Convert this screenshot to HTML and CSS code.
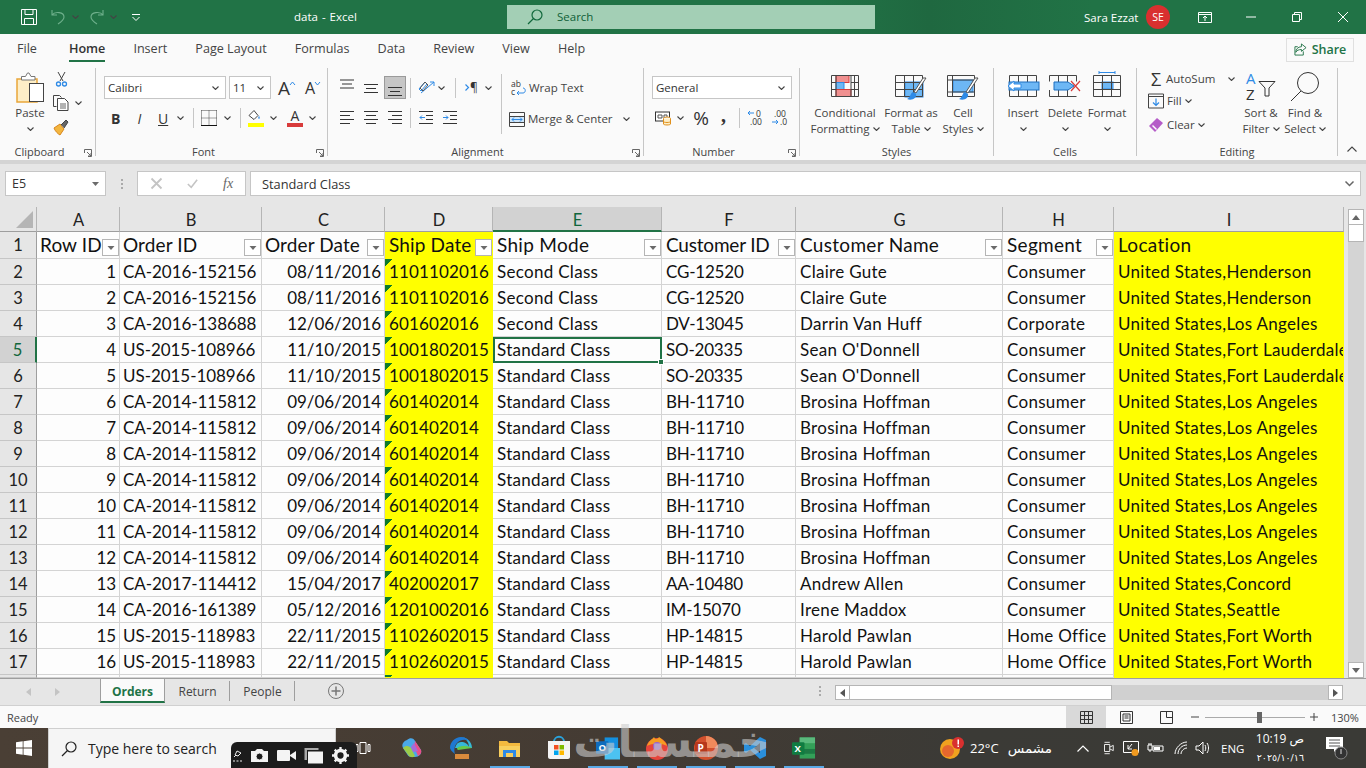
FILE: index.html
```html
<!DOCTYPE html>
<html lang="en">
<head>
<meta charset="utf-8">
<title>data - Excel</title>
<link rel="stylesheet" href="styles.css">
</head>
<body>
<svg class="sprite" width="0" height="0">
  <symbol id="chev" viewBox="0 0 7 4"><path d="M.5.5l3 3 3-3" fill="none" stroke="#444" stroke-width="1.1"/></symbol>
  <symbol id="launch" viewBox="0 0 8 8"><path d="M.5 4V.5h7v7H4M3 3l4 4M7 4v3H4" fill="none" stroke="#666"/></symbol>
  <symbol id="farrow" viewBox="0 0 7 4"><path d="M0 0h7L3.500 4z" fill="#6b6b6b"/></symbol>
</svg>

<header class="titlebar">
  <div class="qat">
    <svg class="i16 ml-21" viewBox="0 0 16 16"><path d="M.5.5h15v15H.5zM4 .5v5h8v-5M3.500 15.500V9.500h9v6" fill="none" stroke="#fff"/></svg>
    <svg class="i14 ml-14" viewBox="0 0 14 16"><path d="M1 1v5h5M1 6c3-4 12-3 12 2 0 3-3 5-6 7" fill="none" stroke="#6fb08c" stroke-width="1.100"/></svg>
    <svg class="chev ml-7"><use href="#chev"/></svg>
    <svg class="i14 ml-11" viewBox="0 0 14 16"><path d="M13 1v5H8M13 6C10 2 1 3 1 8c0 3 3 5 6 7" fill="none" stroke="#6fb08c" stroke-width="1.100"/></svg>
    <svg class="chev ml-6"><use href="#chev"/></svg>
    <svg class="custom ml-15" viewBox="0 0 8 7"><path d="M0 .5h8M.5 3l3.500 3.500 3.500-3.500" fill="none" stroke="#fff"/></svg>
  </div>
  <div class="doc-title">data - Excel</div>
  <div class="search">
    <svg class="i16" viewBox="0 0 16 16"><circle cx="10" cy="6" r="5" fill="none" stroke="#11683c" stroke-width="1.200"/><path d="M6.500 9.500L1 15" stroke="#11683c" stroke-width="1.200"/></svg>
    <span class="search-t">Search</span>
  </div>
  <div class="account">
    <span class="user">Sara Ezzat</span>
    <span class="avatar">SE</span>
    <svg class="win-ic ml-28" viewBox="0 0 14 11"><path d="M.5 .5h13v10H.5zM.5 2.500h13M7 9V4.500M5 6l2-2 2 2" fill="none" stroke="#fff"/></svg>
    <svg class="win-ic2 ml-34" viewBox="0 0 10 10"><path d="M0 5h10" stroke="#fff"/></svg>
    <svg class="win-ic2 ml-36" viewBox="0 0 10 10"><path d="M.5 2.500h7v7h-7zM2.500 2.500v-2h7v7h-2" fill="none" stroke="#fff"/></svg>
    <svg class="win-ic2 ml-36" viewBox="0 0 10 10"><path d="M0 0l10 10M10 0L0 10" stroke="#fff"/></svg>
  </div>
</header>

<nav class="tabs">
  <span class="tab">File</span>
  <span class="tab home">Home</span>
  <span class="tab">Insert</span>
  <span class="tab">Page Layout</span>
  <span class="tab">Formulas</span>
  <span class="tab">Data</span>
  <span class="tab">Review</span>
  <span class="tab">View</span>
  <span class="tab">Help</span>
  <button class="share">
    <svg class="i13" viewBox="0 0 14 14"><path d="M8 1l5 4-5 4V7C5 7 3 8 2 10c0-3 2-6 6-6zM10 9v4H1V4h3" fill="none" stroke="#217346"/></svg>
    Share
  </button>
</nav>

<section class="ribbon">
  <div class="group g-clip">
    <div class="gbody">
      <div class="paste">
        <svg class="paste-ic" viewBox="0 0 29 31"><path d="M1 7h20v23H1z" fill="#fdeec7" stroke="#e9a63a" stroke-width="1.500"/><path d="M5.500 8V4.500h4l2-3.500h1.500l2 3.500h4V8z" fill="#fff" stroke="#777"/><rect x="13.500" y="11.500" width="14" height="18" fill="#fff" stroke="#444"/></svg>
        <span class="lbl">Paste</span>
        <svg class="chev mt-6"><use href="#chev"/></svg>
      </div>
      <div class="clip-small">
        <svg class="i-sc" viewBox="0 0 11 16"><path d="M2 1l5 9M9 1L4 10" stroke="#444" fill="none"/><circle cx="2.500" cy="13" r="2" fill="none" stroke="#2e8ae6" stroke-width="1.300"/><circle cx="8.500" cy="13" r="2" fill="none" stroke="#2e8ae6" stroke-width="1.300"/></svg>
        <div class="row-c"><svg class="i16" viewBox="0 0 16 16"><path d="M3.500 11.500h-3V.5h6l2 2" fill="none" stroke="#444"/><path d="M4.500 3.500h7l3.500 3.500v8.500H4.500z" fill="#fff" stroke="#444"/><path d="M7 9h6M7 11h6M7 13h6" stroke="#666"/></svg><svg class="chev ml-6"><use href="#chev"/></svg></div>
        <svg class="i16" viewBox="0 0 16 16"><path d="M1 9l6-4 4 5-4 6c-2-1-5-4-6-7z" fill="#f3b63f" stroke="#d9861c"/><path d="M8 6l5-5 2 2-4 6" fill="#666" stroke="#444"/></svg>
      </div>
    </div>
    <div class="glabel"><span>Clipboard</span><svg class="launch"><use href="#launch"/></svg></div>
  </div>

  <div class="group g-font">
    <div class="gbody rows">
      <div class="rrow">
        <div class="combo ml-8 w-122">Calibri<svg class="chev"><use href="#chev"/></svg></div>
        <div class="combo ml-3 w-42">11<svg class="chev"><use href="#chev"/></svg></div>
        <span class="bigA ml-7">A<svg class="mini-c" viewBox="0 0 5 3"><path d="M0 3l2.500-3L5 3" fill="none" stroke="#2e8ae6"/></svg></span>
        <span class="bigA small ml-10">A<svg class="mini-c" viewBox="0 0 5 3"><path d="M0 0l2.500 3L5 0" fill="none" stroke="#2e8ae6"/></svg></span>
      </div>
      <div class="rrow">
        <b class="fmt ml-15">B</b>
        <i class="fmt ml-15 serif">I</i>
        <span class="fmt u ml-14">U</span>
        <svg class="chev ml-10"><use href="#chev"/></svg>
        <span class="vsep ml-9"></span>
        <svg class="i16 ml-7" viewBox="0 0 16 16"><path d="M.5.5h15M.5 8h15M8 .5v15M.5.5v15M15.500.5v15" fill="none" stroke="#444" stroke-dasharray="1 1"/><path d="M0 15.500h16" stroke="#111"/></svg>
        <svg class="chev ml-7"><use href="#chev"/></svg>
        <span class="vsep ml-9"></span>
        <span class="fill ml-7"><svg class="i13" viewBox="0 0 13 12"><path d="M1 6l5-5 4 5-4 4z" fill="#fff" stroke="#444"/><path d="M11 6l1 3h-2z" fill="#2e8ae6"/></svg></span>
        <svg class="chev ml-6"><use href="#chev"/></svg>
        <span class="tcolor ml-10">A</span>
        <svg class="chev ml-6"><use href="#chev"/></svg>
      </div>
    </div>
    <div class="glabel"><span>Font</span><svg class="launch"><use href="#launch"/></svg></div>
  </div>

  <div class="group g-align">
    <div class="gbody">
      <div class="rows w-173">
        <div class="rrow">
          <svg class="al ml-12" viewBox="0 0 14 22"><path d="M0 3h14M2 7h10M0 11h14" stroke="#333"/></svg>
          <svg class="al ml-10" viewBox="0 0 14 22"><path d="M0 7.500h14M2 11.500h10M0 15.500h14" stroke="#333"/></svg>
          <span class="al-on ml-6"><svg class="al" viewBox="0 0 14 22"><path d="M0 10.500h14M2 14.500h10M0 18.500h14" stroke="#333"/></svg></span>
          <span class="vsep ml-4"></span>
          <svg class="i16 ml-7" viewBox="0 0 16 16"><path d="M1 9l6-7 2 2-6 7zM3 13l13-11M16 2h-4M16 2v4" fill="none" stroke="#2e8ae6"/><path d="M2 8l5-6 3 3-5 6z" fill="none" stroke="#555"/></svg>
          <svg class="chev ml-4"><use href="#chev"/></svg>
          <span class="vsep ml-10"></span>
          <span class="rtl ml-9"><svg class="rtl-a" viewBox="0 0 4 7"><path d="M.5.500L3.500 3.500.5 6.500" fill="none" stroke="#2e8ae6" stroke-width="1.200"/></svg>¶</span>
          <svg class="chev ml-7"><use href="#chev"/></svg>
        </div>
        <div class="rrow">
          <svg class="al ml-12" viewBox="0 0 14 14"><path d="M0 .5h14M0 4.500h10M0 8.500h14M0 12.500h10" stroke="#333"/></svg>
          <svg class="al ml-10" viewBox="0 0 14 14"><path d="M0 .5h14M2 4.500h10M0 8.500h14M2 12.500h10" stroke="#333"/></svg>
          <svg class="al ml-10" viewBox="0 0 14 14"><path d="M0 .5h14M4 4.500h10M0 8.500h14M4 12.500h10" stroke="#333"/></svg>
          <span class="vsep ml-8"></span>
          <svg class="al ml-8" viewBox="0 0 14 14"><path d="M0 .5h14M7 4.500h7M7 8.500h7M0 12.500h14" stroke="#333"/><path d="M6 6.500H1M3 4.500l-2 2 2 2" fill="none" stroke="#2e8ae6"/></svg>
          <svg class="al ml-10" viewBox="0 0 14 14"><path d="M0 .5h14M7 4.500h7M7 8.500h7M0 12.500h14" stroke="#333"/><path d="M0 6.500h5M3 4.500l2 2-2 2" fill="none" stroke="#2e8ae6"/></svg>
        </div>
      </div>
      <span class="vsep tall"></span>
      <div class="rows">
        <div class="rrow">
          <svg class="wrap-ic ml-9" viewBox="0 0 15 16"><text x="0" y="7" class="svgt">ab</text><text x="0" y="15" class="svgt">c</text><path d="M6 13h6c3 0 3-5 0-5M8 11l-2 2 2 2" fill="none" stroke="#2e8ae6"/></svg>
          <span class="lbl ml-3">Wrap Text</span>
        </div>
        <div class="rrow merge">
          <svg class="merge-ic ml-7" viewBox="0 0 16 15"><path d="M.5.5h15v14H.5zM.5 4.500h15M.5 10.500h15" fill="none" stroke="#444"/><rect x="1" y="5" width="14" height="5" fill="#cfe6fa"/><path d="M3 7.500h10M5 5.500l-2 2 2 2M11 5.500l2 2-2 2" fill="none" stroke="#2e8ae6"/></svg>
          <span class="lbl ml-3">Merge &amp; Center</span>
          <svg class="chev ml-10"><use href="#chev"/></svg>
        </div>
      </div>
    </div>
    <div class="glabel"><span>Alignment</span><svg class="launch"><use href="#launch"/></svg></div>
  </div>

  <div class="group g-num">
    <div class="gbody rows">
      <div class="rrow"><div class="combo ml-8 w-140">General<svg class="chev"><use href="#chev"/></svg></div></div>
      <div class="rrow">
        <svg class="i16 ml-11" viewBox="0 0 16 15"><rect x=".5" y="1.500" width="14" height="9" fill="#fff" stroke="#333"/><path d="M3 4.500h4v3H3zM9 4.500h3v3H9z" fill="none" stroke="#555"/><ellipse cx="12" cy="8" rx="3.500" ry="1.500" fill="#fff" stroke="#e0901c"/><path d="M8.500 8v5.500c0 1.300 7 1.300 7 0V8M8.500 11c0 1.300 7 1.300 7 0" fill="#fdeec7" stroke="#e0901c"/></svg>
        <svg class="chev ml-6"><use href="#chev"/></svg>
        <span class="pct ml-9">%</span>
        <span class="comma ml-12">,</span>
        <span class="vsep ml-12"></span>
        <svg class="i16 ml-7" viewBox="0 0 16 16"><path d="M7 3H1M3 1L1 3l2 2" fill="none" stroke="#2e8ae6"/><text x="9" y="7" class="svgt">0</text><text x="3" y="15" class="svgt">.00</text></svg>
        <svg class="i16 ml-8" viewBox="0 0 16 16"><text x="3" y="7" class="svgt">.00</text><path d="M1 12h6M5 10l2 2-2 2" fill="none" stroke="#2e8ae6"/><text x="9" y="15" class="svgt">.0</text></svg>
      </div>
    </div>
    <div class="glabel"><span>Number</span><svg class="launch"><use href="#launch"/></svg></div>
  </div>

  <div class="group g-styles">
    <div class="gbody">
      <div class="big w-80 ml-5">
        <svg class="big-ic" viewBox="0 0 28 22"><rect x="5" y=".5" width="13" height="7" fill="#f09090" stroke="#d83b3b"/><rect x="5" y="7.500" width="8" height="7" fill="#6db7f5" stroke="#2e8ae6"/><rect x="5" y="14.500" width="15" height="7" fill="#f09090" stroke="#d83b3b"/><path d="M.5.5h27v21H.5zM.5 7.500H5M20 7.500h7.500M.5 14.500H5M20 14.500h7.500M5 .5v21M20 .5v21M23.500 .5v21" fill="none" stroke="#444"/></svg>
        <span class="lbl">Conditional</span>
        <span class="lbl">Formatting<svg class="chev ml-3"><use href="#chev"/></svg></span>
      </div>
      <div class="big w-52">
        <svg class="big-ic2" viewBox="0 0 32 26"><rect x="10" y="7" width="18" height="15" fill="#6db7f5" stroke="#2e8ae6"/><path d="M.5.5h27v21H.5zM.5 7.500h27M.5 14.500h27M9.500.5v21M18.500.5v21" fill="none" stroke="#444"/><path d="M31 3L21 18l-2-1 9-14z" fill="#fff" stroke="#555"/><path d="M18 17c-3 1-2 5-6 7 5 2 10-1 9-5z" fill="#2e8ae6"/></svg>
        <span class="lbl">Format as</span>
        <span class="lbl">Table<svg class="chev ml-3"><use href="#chev"/></svg></span>
      </div>
      <div class="big w-52">
        <svg class="big-ic2" viewBox="0 0 32 26"><rect x="6" y="5" width="20" height="12" fill="#6db7f5" stroke="#2e8ae6"/><path d="M.5.5h27v21H.5zM5.500.5v21M.5 5h27M.5 17h27" fill="none" stroke="#444"/><path d="M31 3L21 18l-2-1 9-14z" fill="#fff" stroke="#555"/><path d="M18 17c-3 1-2 5-6 7 5 2 10-1 9-5z" fill="#2e8ae6"/></svg>
        <span class="lbl">Cell</span>
        <span class="lbl">Styles<svg class="chev ml-3"><use href="#chev"/></svg></span>
      </div>
    </div>
    <div class="glabel"><span>Styles</span></div>
  </div>

  <div class="group g-cells">
    <div class="gbody">
      <div class="big w-42 ml-8">
        <svg class="big-ic2" viewBox="0 0 32 26"><path d="M2.500.5h27v21h-27zM11.500.5v21M20.500.5v21" fill="none" stroke="#444"/><rect x="2" y="7" width="30" height="8" fill="#6db7f5" stroke="#1c6fc0"/><path d="M14 9H7V6l-6 5 6 5v-3h7z" fill="#fff" stroke="#2e8ae6"/></svg>
        <span class="lbl">Insert</span>
        <svg class="chev mt-6"><use href="#chev"/></svg>
      </div>
      <div class="big w-42">
        <svg class="big-ic2" viewBox="0 0 32 26"><path d="M.5 .5h27M.5 21.500h27M.5 .5v6M.5 15v6.500M9.500.5v21M18.500.5v21M27.500.5v6" fill="none" stroke="#444"/><path d="M5 7h14l6 4-6 4H5z" fill="#6db7f5" stroke="#1c6fc0"/><path d="M22 6l9 10M31 6l-9 10" stroke="#d83b3b" stroke-width="1.200"/></svg>
        <span class="lbl">Delete</span>
        <svg class="chev mt-6"><use href="#chev"/></svg>
      </div>
      <div class="big w-42">
        <svg class="big-ic3" viewBox="0 0 28 26"><path d="M6 1.500h16M6 0v3M22 0v3" fill="none" stroke="#2e8ae6"/><rect x="9" y="11" width="11" height="7" fill="#6db7f5" stroke="#2e8ae6"/><path d="M.5 4.500h27v21H.5zM.5 11.500h27M.5 18.500h27M9.500 4.500v21M18.500 4.500v21" fill="none" stroke="#444"/></svg>
        <span class="lbl">Format</span>
        <svg class="chev mt-6"><use href="#chev"/></svg>
      </div>
    </div>
    <div class="glabel"><span>Cells</span></div>
  </div>

  <div class="group g-edit">
    <div class="gbody">
      <div class="edit-col">
        <div class="erow"><span class="sigma">Σ</span><span class="lbl ml-2">AutoSum</span><svg class="chev ml-13"><use href="#chev"/></svg></div>
        <div class="erow"><svg class="i16" viewBox="0 0 16 15"><path d="M.5.5h15v14H.5zM.5 3h15" fill="none" stroke="#444"/><path d="M8 5v7M5 9l3 3 3-3" fill="none" stroke="#2e8ae6" stroke-width="1.200"/></svg><span class="lbl ml-3">Fill</span><svg class="chev ml-3"><use href="#chev"/></svg></div>
        <div class="erow e3"><svg class="i16" viewBox="0 0 16 16"><path d="M1 9l8-8 6 5-8 9z" fill="#b55cc8"/><path d="M4 9l4 4 1-1-4-4z" fill="#fff"/></svg><span class="lbl ml-3">Clear</span><svg class="chev ml-3"><use href="#chev"/></svg></div>
      </div>
      <div class="big tall w-42">
        <svg class="sort-ic" viewBox="0 0 30 29"><text x="0" y="12" class="svgt-b">A</text><text x="0" y="28" class="svgt-k">Z</text><path d="M13 9.500h16l-6 6.500v8h-4v-8z" fill="none" stroke="#333"/></svg>
        <span class="lbl">Sort &amp;</span>
        <span class="lbl">Filter<svg class="chev ml-3"><use href="#chev"/></svg></span>
      </div>
      <div class="big tall w-46">
        <svg class="sort-ic" viewBox="0 0 30 29"><circle cx="18" cy="11" r="10.500" fill="none" stroke="#333"/><path d="M11 19L1 29" stroke="#333"/></svg>
        <span class="lbl">Find &amp;</span>
        <span class="lbl">Select<svg class="chev ml-3"><use href="#chev"/></svg></span>
      </div>
    </div>
    <div class="glabel"><span>Editing</span></div>
  </div>
  <svg class="collapse" viewBox="0 0 10 6"><path d="M.5 5.500L5 1l4.500 4.500" fill="none" stroke="#444" stroke-width="1.100"/></svg>
</section>

<div class="fbar">
  <div class="namebox">E5<svg class="nb-arrow"><use href="#farrow"/></svg></div>
  <span class="grip"></span>
  <div class="fbtns">
    <svg class="fb-ic" viewBox="0 0 11 11"><path d="M.5.5l10 10M10.500.5l-10 10" stroke="#c4c4c4" stroke-width="1.800"/></svg>
    <svg class="fb-ic" viewBox="0 0 13 11"><path d="M1 6l4 4 7-9" fill="none" stroke="#c4c4c4" stroke-width="1.800"/></svg>
    <span class="fx">fx</span>
  </div>
  <div class="finput"><span>Standard Class</span><svg class="fi-chev" viewBox="0 0 9 6"><path d="M.5.5l4 4 4-4" fill="none" stroke="#666" stroke-width="1.500"/></svg></div>
</div>

<main class="workarea">
  <div class="sheet">
    <div class="ch corner"><svg class="corner-t" viewBox="0 0 17 17"><path d="M17 0v17H0z" fill="#b5b5b5"/></svg></div>
    <div class="ch">A</div><div class="ch">B</div><div class="ch">C</div><div class="ch">D</div><div class="ch sel">E</div><div class="ch">F</div><div class="ch">G</div><div class="ch">H</div><div class="ch">I</div>

    <div class="rh">1</div>
    <div class="c hd">Row ID<span class="fbtn"><svg class="farrow"><use href="#farrow"/></svg></span></div><div class="c hd">Order ID<span class="fbtn"><svg class="farrow"><use href="#farrow"/></svg></span></div><div class="c hd">Order Date<span class="fbtn"><svg class="farrow"><use href="#farrow"/></svg></span></div><div class="c hd y">Ship Date<span class="fbtn"><svg class="farrow"><use href="#farrow"/></svg></span></div><div class="c hd">Ship Mode<span class="fbtn"><svg class="farrow"><use href="#farrow"/></svg></span></div><div class="c hd">Customer ID<span class="fbtn"><svg class="farrow"><use href="#farrow"/></svg></span></div><div class="c hd">Customer Name<span class="fbtn"><svg class="farrow"><use href="#farrow"/></svg></span></div><div class="c hd">Segment<span class="fbtn"><svg class="farrow"><use href="#farrow"/></svg></span></div><div class="c hd y">Location</div>

    <div class="rh">2</div><div class="c n">1</div><div class="c">CA-2016-152156</div><div class="c n">08/11/2016</div><div class="c y t">1101102016</div><div class="c">Second Class</div><div class="c">CG-12520</div><div class="c">Claire Gute</div><div class="c">Consumer</div><div class="c y">United States,Henderson</div>
    <div class="rh">3</div><div class="c n">2</div><div class="c">CA-2016-152156</div><div class="c n">08/11/2016</div><div class="c y t">1101102016</div><div class="c">Second Class</div><div class="c">CG-12520</div><div class="c">Claire Gute</div><div class="c">Consumer</div><div class="c y">United States,Henderson</div>
    <div class="rh">4</div><div class="c n">3</div><div class="c">CA-2016-138688</div><div class="c n">12/06/2016</div><div class="c y t">601602016</div><div class="c">Second Class</div><div class="c">DV-13045</div><div class="c">Darrin Van Huff</div><div class="c">Corporate</div><div class="c y">United States,Los Angeles</div>
    <div class="rh sel">5</div><div class="c n">4</div><div class="c">US-2015-108966</div><div class="c n">11/10/2015</div><div class="c y t">1001802015</div><div class="c cur">Standard Class<span class="handle"></span></div><div class="c">SO-20335</div><div class="c">Sean O'Donnell</div><div class="c">Consumer</div><div class="c y">United States,Fort Lauderdale</div>
    <div class="rh">6</div><div class="c n">5</div><div class="c">US-2015-108966</div><div class="c n">11/10/2015</div><div class="c y t">1001802015</div><div class="c">Standard Class</div><div class="c">SO-20335</div><div class="c">Sean O'Donnell</div><div class="c">Consumer</div><div class="c y">United States,Fort Lauderdale</div>
    <div class="rh">7</div><div class="c n">6</div><div class="c">CA-2014-115812</div><div class="c n">09/06/2014</div><div class="c y t">601402014</div><div class="c">Standard Class</div><div class="c">BH-11710</div><div class="c">Brosina Hoffman</div><div class="c">Consumer</div><div class="c y">United States,Los Angeles</div>
    <div class="rh">8</div><div class="c n">7</div><div class="c">CA-2014-115812</div><div class="c n">09/06/2014</div><div class="c y t">601402014</div><div class="c">Standard Class</div><div class="c">BH-11710</div><div class="c">Brosina Hoffman</div><div class="c">Consumer</div><div class="c y">United States,Los Angeles</div>
    <div class="rh">9</div><div class="c n">8</div><div class="c">CA-2014-115812</div><div class="c n">09/06/2014</div><div class="c y t">601402014</div><div class="c">Standard Class</div><div class="c">BH-11710</div><div class="c">Brosina Hoffman</div><div class="c">Consumer</div><div class="c y">United States,Los Angeles</div>
    <div class="rh">10</div><div class="c n">9</div><div class="c">CA-2014-115812</div><div class="c n">09/06/2014</div><div class="c y t">601402014</div><div class="c">Standard Class</div><div class="c">BH-11710</div><div class="c">Brosina Hoffman</div><div class="c">Consumer</div><div class="c y">United States,Los Angeles</div>
    <div class="rh">11</div><div class="c n">10</div><div class="c">CA-2014-115812</div><div class="c n">09/06/2014</div><div class="c y t">601402014</div><div class="c">Standard Class</div><div class="c">BH-11710</div><div class="c">Brosina Hoffman</div><div class="c">Consumer</div><div class="c y">United States,Los Angeles</div>
    <div class="rh">12</div><div class="c n">11</div><div class="c">CA-2014-115812</div><div class="c n">09/06/2014</div><div class="c y t">601402014</div><div class="c">Standard Class</div><div class="c">BH-11710</div><div class="c">Brosina Hoffman</div><div class="c">Consumer</div><div class="c y">United States,Los Angeles</div>
    <div class="rh">13</div><div class="c n">12</div><div class="c">CA-2014-115812</div><div class="c n">09/06/2014</div><div class="c y t">601402014</div><div class="c">Standard Class</div><div class="c">BH-11710</div><div class="c">Brosina Hoffman</div><div class="c">Consumer</div><div class="c y">United States,Los Angeles</div>
    <div class="rh">14</div><div class="c n">13</div><div class="c">CA-2017-114412</div><div class="c n">15/04/2017</div><div class="c y t">402002017</div><div class="c">Standard Class</div><div class="c">AA-10480</div><div class="c">Andrew Allen</div><div class="c">Consumer</div><div class="c y">United States,Concord</div>
    <div class="rh">15</div><div class="c n">14</div><div class="c">CA-2016-161389</div><div class="c n">05/12/2016</div><div class="c y t">1201002016</div><div class="c">Standard Class</div><div class="c">IM-15070</div><div class="c">Irene Maddox</div><div class="c">Consumer</div><div class="c y">United States,Seattle</div>
    <div class="rh">16</div><div class="c n">15</div><div class="c">US-2015-118983</div><div class="c n">22/11/2015</div><div class="c y t">1102602015</div><div class="c">Standard Class</div><div class="c">HP-14815</div><div class="c">Harold Pawlan</div><div class="c">Home Office</div><div class="c y">United States,Fort Worth</div>
    <div class="rh">17</div><div class="c n">16</div><div class="c">US-2015-118983</div><div class="c n">22/11/2015</div><div class="c y t">1102602015</div><div class="c">Standard Class</div><div class="c">HP-14815</div><div class="c">Harold Pawlan</div><div class="c">Home Office</div><div class="c y">United States,Fort Worth</div>
    <div class="rh"></div><div class="c"></div><div class="c"></div><div class="c"></div><div class="c y t"></div><div class="c"></div><div class="c"></div><div class="c"></div><div class="c"></div><div class="c y"></div>
  </div>
  <aside class="vscroll">
    <span class="sb-btn"><svg class="sb-a" viewBox="0 0 8 5"><path d="M4 0l4 5H0z" fill="#666"/></svg></span>
    <span class="sb-thumb"></span>
    <span class="sb-btn end"><svg class="sb-a" viewBox="0 0 8 5"><path d="M0 0h8L4 5z" fill="#666"/></svg></span>
  </aside>
</main>

<div class="sheetbar">
  <svg class="nav ml-26" viewBox="0 0 5 8"><path d="M5 0v8L0 4z" fill="#c4c4c4"/></svg>
  <svg class="nav ml-24" viewBox="0 0 5 8"><path d="M0 0v8l5-4z" fill="#c4c4c4"/></svg>
  <div class="stab on">Orders</div>
  <div class="stab">Return</div>
  <div class="stab">People</div>
  <svg class="plus" viewBox="0 0 16 16"><circle cx="8" cy="8" r="7.500" fill="none" stroke="#777"/><path d="M8 3.500v9M3.500 8h9" stroke="#777" stroke-width="1.500"/></svg>
  <span class="grip g2"></span>
  <div class="hscroll">
    <span class="hb"><svg class="nav" viewBox="0 0 5 8"><path d="M5 0v8L0 4z" fill="#555"/></svg></span>
    <span class="hthumb"></span>
    <span class="hb end"><svg class="nav" viewBox="0 0 5 8"><path d="M0 0v8l5-4z" fill="#555"/></svg></span>
  </div>
</div>

<footer class="statusbar">
  <span class="ready">Ready</span>
  <div class="views">
    <span class="vb on"><svg class="i13" viewBox="0 0 13 13"><path d="M.5.5h12v12H.5zM4.500.5v12M8.500.5v12M.5 4.500h12M.5 8.500h12" fill="none" stroke="#333"/></svg></span>
    <span class="vb"><svg class="i13" viewBox="0 0 13 13"><path d="M.5.5h12v12H.5zM3 3h7v7H3zM4.500 5h4M4.500 7h4" fill="none" stroke="#333"/></svg></span>
    <span class="vb"><svg class="i13" viewBox="0 0 13 13"><path d="M.5.5h12v12H.5zM6.500.5v6h6" fill="none" stroke="#333"/></svg></span>
  </div>
  <svg class="zs" viewBox="0 0 8 8"><path d="M0 4h8" stroke="#444"/></svg>
  <div class="slider"><span class="knob"></span></div>
  <svg class="zs" viewBox="0 0 8 8"><path d="M0 4h8M4 0v8" stroke="#444"/></svg>
  <span class="zoom">130%</span>
</footer>

<div class="taskbar">
  <svg class="winlogo" viewBox="0 0 16 16"><path d="M0 2.300l6.700-1v6.300H0zM7.500 1.200L16 0v7.600H7.500zM0 8.400h6.700v6.300L0 13.700zM7.500 8.400H16V16l-8.500-1.200z" fill="#fff"/></svg>
  <div class="tsearch">
    <svg class="i16" viewBox="0 0 16 16"><circle cx="10" cy="6" r="5" fill="none" stroke="#222" stroke-width="1.200"/><path d="M6.500 9.500L1 15" stroke="#222" stroke-width="1.200"/></svg>
    <span>Type here to search</span>
  </div>
  <span class="app"><svg class="a14" viewBox="0 0 14 14"><path d="M4 1.500h6v11H4zM0 3.500h2v7H0zM12 3.500h2v7h-2z" fill="none" stroke="#fff"/></svg></span>
  <span class="app"><svg class="a22" viewBox="0 0 22 22"><path d="M6 3c3-3 7-2 8 1l6 9c1 4-2 7-6 7h-3c-3 0-4-1-5-3L2 11C0 7 3 4 6 3z" fill="#4aa8e8"/><path d="M14 4l6 9c1 3-1 5-3 6l-4-9z" fill="#e94f8a"/><path d="M2 11c3-3 6-2 8 0l4 8c-2 2-5 1-6 0z" fill="#9ccc4a"/><path d="M13 6l4 8-5 1-2-5z" fill="#a56bd8"/></svg></span>
  <span class="app"><svg class="a24" viewBox="0 0 24 24"><path d="M12 1c6 0 11 5 11 11H6c1-4 3-6 6-6 4 0 7 2 8 5C20 6 16 1 12 1z" fill="#35b8d8"/><path d="M1 12C1 6 6 1 12 1c4 0 7 2 9 5-3-3-9-3-13 1-3 3-3 8-2 11-3-2-5-5-5-6z" fill="#1f78d1"/><path d="M6 18h14v5H6z" fill="#d88a3c"/><path d="M8 13c0-3 8-4 13-2l2 1-14 2z" fill="#65c94a"/></svg></span>
  <span class="app run"><svg class="a21" viewBox="0 0 21 18"><path d="M0 2h8l2 2h11v14H0z" fill="#f3b93f"/><path d="M0 7h21v11H0z" fill="#f8cf5e"/><path d="M4 11h13v7H4z" fill="#2e8ae6"/><path d="M7 14h7v4H7z" fill="#f8cf5e"/></svg></span>
  <span class="app"><svg class="a24" viewBox="0 0 24 24"><path d="M7 6c0-7 10-7 10 0" fill="none" stroke="#2aa3dc" stroke-width="1.800"/><path d="M1 5h22v16c0 1-1 2-2 2H3c-1 0-2-1-2-2z" fill="#f4f4f4"/><path d="M7 9h4.500v4.500H7z" fill="#f25022"/><path d="M12.500 9H17v4.500h-4.500z" fill="#7fba00"/><path d="M7 14.500h4.500V19H7z" fill="#00a4ef"/><path d="M12.500 14.500H17V19h-4.500z" fill="#ffb900"/></svg></span>
  <span class="app run"><svg class="a24" viewBox="0 0 25 24"><path d="M9 1h14v14H9z" fill="#1490df"/><path d="M9 12h16v12H9z" fill="#4cc2f1"/><rect x="0" y="5" width="13" height="13" rx="1" fill="#0f6cbd"/><text x="2.500" y="15" class="svgw">O</text></svg></span>
  <span class="app run"><svg class="a24" viewBox="0 0 24 24"><circle cx="12" cy="13" r="11" fill="#e7453c"/><path d="M2 10c2-6 5-6 7-9 1 3 4 2 5 0 4 3 7 5 8 9-5-3-15-3-20 0z" fill="#f59b23"/><circle cx="12" cy="10" r="4" fill="#9a5fd0"/></svg></span>
  <span class="app run"><svg class="a24" viewBox="0 0 24 24"><circle cx="12" cy="12" r="12" fill="#d2502d"/><path d="M12 0a12 12 0 0 1 12 12H12z" fill="#f08a5c"/><rect x="1" y="6" width="12" height="12" rx="1" fill="#b7381c"/><text x="3.500" y="16" class="svgw">P</text></svg></span>
  <span class="app run"><svg class="a24" viewBox="0 0 24 24"><path d="M17 1l6 3v16l-6 3-10-9-4 3-2-1V8l2-1 4 3z" fill="#2a8fdc"/><path d="M17 7l-6 5 6 5z" fill="#111d2c"/></svg></span>
  <span class="app run"><svg class="a24" viewBox="0 0 25 24"><path d="M8 1h16v22H8z" fill="#33a058"/><path d="M8 1h16v6H8z" fill="#5ab97c"/><path d="M8 13h16v5H8z" fill="#1d7a44"/><rect x="0" y="6" width="13" height="13" rx="1" fill="#107c41"/><text x="2.500" y="16" class="svgw">X</text></svg></span>

  <div class="tray">
    <span class="weather"><svg class="a24" viewBox="0 0 24 22"><circle cx="10" cy="12" r="10" fill="#f0a21f"/><circle cx="8" cy="14" r="6" fill="#e5672e"/><circle cx="18" cy="6" r="6" fill="#d9302f"/><path d="M17.500 2.500h1.500v5h-1.500zM17.500 8.500h1.500V10h-1.500z" fill="#fff"/></svg></span>
    <span class="temp ml-6">22°C</span>
    <span class="ar ml-10" lang="ar" dir="rtl">مشمس</span>
    <svg class="a12 ml-25" viewBox="0 0 12 7"><path d="M.5 6.500l5.500-5.500 5.500 5.500" fill="none" stroke="#fff" stroke-width="1.200"/></svg>
    <svg class="a14 ml-12" viewBox="0 0 14 16"><path d="M3 4h6v8H3zM9 7l4-2v6l-4-2M3 1.500h6M3 14.500h6" fill="none" stroke="#fff"/></svg>
    <svg class="a16 ml-8" viewBox="0 0 16 16"><path d="M.5 1.500h15v11H.5z" fill="none" stroke="#fff"/><path d="M5 9l4-5M5 5v4h4" fill="none" stroke="#fff"/><circle cx="12" cy="12.500" r="3.500" fill="#f09a1f"/></svg>
    <svg class="a16 ml-8" viewBox="0 0 16 12"><path d="M1 3h4v5H1zM2 1v2M4 1v2M3 8v2M6 4h10v5H6z" fill="none" stroke="#fff"/><path d="M7 5h6v3H7z" fill="#fff"/></svg>
    <svg class="a14 ml-11" viewBox="0 0 14 14"><path d="M1 13c0-6 6-12 12-12M4 13c0-5 4-9 9-9M7 13c0-3 3-6 6-6" fill="none" stroke="#fff"/></svg>
    <svg class="a14 ml-7" viewBox="0 0 14 14"><path d="M1 5h3l4-4v12L4 9H1zM10 4c1 2 1 4 0 6M12 2c2 3 2 7 0 10" fill="none" stroke="#fff"/></svg>
    <span class="eng ml-12">ENG</span>
    <div class="clock">
      <span class="time">10:19 <span lang="ar">ص</span></span>
      <span class="date" lang="ar">٢٠٢٥/١٠/١٦</span>
    </div>
    <svg class="notif ml-21" viewBox="0 0 24 24"><path d="M1 1h17v12h-6l-3 3v-3H1z" fill="#fff"/><path d="M4 4h11M4 7h11M4 10h11" stroke="#555"/><circle cx="16" cy="17" r="6" fill="#333" stroke="#888"/><path d="M16 13v5" stroke="#ddd"/></svg>
  </div>

  <div class="recbar">
    <svg class="rec-pin" viewBox="0 0 9 13"><path d="M2 6l2-4 4 2-3 3z" fill="none" stroke="#eee"/><path d="M1 8l2-2" stroke="#eee"/><path d="M0 12h2M3.500 12h2M7 12h2" stroke="#eee"/></svg>
    <svg class="rec-ic" viewBox="0 0 19 15"><path d="M1 3h4l2-2h5l2 2h4v11H1z" fill="#f4f4f4"/><circle cx="9.500" cy="8.500" r="3.500" fill="#1c1c1c" stroke="#f4f4f4"/></svg>
    <svg class="rec-ic" viewBox="0 0 19 15"><rect y="2" width="13" height="11" rx="1" fill="#f4f4f4"/><path d="M13 7l6-4v9l-6-4z" fill="#f4f4f4"/></svg>
    <svg class="rec-ic" viewBox="0 0 19 16"><path d="M.5.5h14v2H3v10H.5z" fill="#aaa"/><rect x="4" y="4" width="15" height="12" fill="#f4f4f4"/></svg>
    <svg class="rec-ic" viewBox="0 0 19 19"><circle cx="9.500" cy="9.500" r="5.500" fill="none" stroke="#f4f4f4" stroke-width="4"/><path d="M9.500 0v4M9.500 15v4M0 9.500h4M15 9.500h4M3 3l3 3M13 13l3 3M16 3l-3 3M6 13l-3 3" stroke="#f4f4f4" stroke-width="2.600"/></svg>
  </div>
  <div class="wmark" lang="ar" dir="rtl">خمـسـات</div>
</div>
</body>
</html>
```

FILE: styles.css
```css
* { box-sizing: border-box; }
html, body { margin: 0; padding: 0; }
body {
  width: 1366px; height: 768px; overflow: hidden;
  display: flex; flex-direction: column;
  font-family: "Open Sans", "Noto Sans", sans-serif;
  font-size: 12px; color: #444; background: #e6e6e6;
}
svg { display: block; flex: none; overflow: visible; }
.sprite { position: absolute; }
.ml-2{margin-left:2px}.ml-3{margin-left:3px}.ml-4{margin-left:4px}.ml-5{margin-left:5px}.ml-6{margin-left:6px}.ml-7{margin-left:7px}.ml-8{margin-left:8px}.ml-9{margin-left:9px}.ml-10{margin-left:10px}.ml-11{margin-left:11px}.ml-12{margin-left:12px}.ml-13{margin-left:13px}.ml-14{margin-left:14px}.ml-15{margin-left:15px}.ml-21{margin-left:21px}.ml-24{margin-left:24px}.ml-25{margin-left:25px}.ml-26{margin-left:26px}.ml-28{margin-left:28px}.ml-34{margin-left:34px}.ml-36{margin-left:36px}
.mt-6{margin-top:6px}
.w-42{width:42px}.w-46{width:46px}.w-52{width:52px}.w-80{width:80px}.w-122{width:122px}.w-140{width:140px}.w-173{width:173px}
.i13{width:13px;height:13px}.i14{width:14px;height:16px}.i16{width:16px;height:16px}
.chev{width:7px;height:4px;display:inline-block}

/* Title bar */
.titlebar { height: 34px; flex: none; display: flex; align-items: center; color: #fff;
  background: linear-gradient(90deg,#217346 0,#217346 60%,#1f6840 68%,#217346 80%); }
.qat { width: 294px; display: flex; align-items: center; }
.custom { width: 8px; height: 7px; }
.doc-title { width: 213px; font-size: 11.500px; word-spacing: 1px; padding-bottom: 2px; }
.search { width: 368px; height: 24px; background: #a3cfb5; display: flex; align-items: center; gap: 14px; padding-left: 20px; color: #0f5f37; font-size: 11.500px; }
.search-t { padding-bottom: 2px; }
.account { flex: 1; display: flex; align-items: center; padding-left: 209px; }
.user { width: 62px; font-size: 11.500px; white-space: nowrap; }
.avatar { width: 24px; height: 24px; border-radius: 50%; background: #d9302f; display: flex; align-items: center; justify-content: center; font-size: 10.500px; }
.win-ic { width: 14px; height: 11px; }
.win-ic2 { width: 10px; height: 10px; }

/* Tabs */
.tabs { height: 28px; flex: none; background: #fafafa; display: flex; align-items: center; padding-left: 17px; gap: 28px; font-size: 12.600px; color: #444; }
.tab { line-height: 29px; height: 28px; }
.tab.home { margin-left: 4px; color: #333; font-weight: 600; box-shadow: inset 0 -2px 0 #217346; }
.share { margin-left: auto; margin-right: 12px; margin-top: 3px; width: 68px; height: 24px; padding: 0; border: 1px solid #e0e0e0; background: #fafafa; color: #217346; display: flex; align-items: center; justify-content: center; gap: 5px; font: 600 12.500px "Open Sans", sans-serif; }

/* Ribbon */
.ribbon { height: 102px; flex: none; background: #fafafa; display: flex; padding-top: 6px; align-items: flex-start; border-bottom: 4px solid #d4d4d4; }
.group { height: 88px; border-right: 1px solid #c6c6c6; display: flex; flex-direction: column; flex: none; }
.g-clip { width: 96px; }
.g-font { width: 232px; }
.g-align { width: 316px; }
.g-num { width: 156px; }
.g-styles { width: 194px; }
.g-cells { width: 143px; }
.g-edit { width: 201px; }
.gbody { height: 76px; display: flex; }
.rows { display: flex; flex-direction: column; gap: 8px; padding-top: 8px; }
.rrow { height: 23px; display: flex; align-items: center; }
.rrow + .rrow { height: 22px; }
.rrow.merge { margin-top: 1px; }
.glabel { height: 12px; display: flex; font-size: 11px; line-height: 16px; color: #444; }
.glabel span { flex: 1; text-align: center; }
.launch { width: 8px; height: 8px; margin: 5px 3px 0 5px; }
.lbl { font-size: 11.500px; line-height: 16px; white-space: nowrap; color: #444; display: flex; align-items: center; }
.paste { width: 32px; margin-left: 14px; display: flex; flex-direction: column; align-items: center; padding-top: 4px; }
.paste-ic { width: 29px; height: 31px; margin-bottom: 2px; }
.clip-small { margin-left: 7px; padding-top: 3px; display: flex; flex-direction: column; gap: 8px; align-items: flex-start; }
.i-sc { width: 11px; height: 16px; margin-left: 3px; }
.row-c { display: flex; align-items: center; }
.combo { height: 23px; border: 1px solid #c6c6c6; background: #fff; display: flex; align-items: center; justify-content: space-between; padding: 0 6px 0 3px; font-size: 11.500px; color: #333; }
.bigA { font-size: 19px; color: #333; display: flex; align-items: flex-start; line-height: 22px; }
.bigA.small { font-size: 16px; }
.mini-c { width: 5px; height: 3px; margin-top: 5px; }
.fmt { font: 14px "Open Sans", sans-serif; width: 9px; text-align: center; color: #333; }
b.fmt { font-weight: 700; }
.serif { font-style: italic; }
.u { text-decoration: underline; }
.vsep { width: 1px; height: 20px; background: #c6c6c6; flex: none; }
.vsep.tall { height: 60px; margin-top: 6px; }
.fill { width: 16px; height: 18px; border-bottom: 4px solid #ffff00; display: block; }
.tcolor { width: 16px; height: 18px; border-bottom: 4px solid #d83b3b; font-size: 14px; line-height: 14px; text-align: center; color: #333; }
.al { width: 14px; height: 14px; }
.rrow:first-child .al { height: 22px; }
.al-on { width: 22px; height: 23px; background: #c6c6c6; border: 1px solid #9a9a9a; display: flex; justify-content: center; }
.rtl { width: 13px; display: flex; align-items: center; font-size: 12px; color: #333; gap: 1px; }
.rtl-a { width: 4px; height: 7px; }
.wrap-ic { width: 15px; height: 16px; }
.merge-ic { width: 16px; height: 15px; }
.svgt { font: 8.500px "Open Sans", sans-serif; fill: #333; }
.svgt-b { font: 15px "Open Sans", sans-serif; fill: #2e8ae6; }
.svgt-k { font: 15px "Open Sans", sans-serif; fill: #333; }
.svgw { font: 700 10px "Open Sans", sans-serif; fill: #fff; }
.pct { font-size: 19px; color: #333; line-height: 20px; width: 16px; text-align: center; }
.comma { font: 700 20px "Liberation Serif", serif; color: #333; line-height: 14px; height: 20px; width: 6px; }
.big { display: flex; flex-direction: column; align-items: center; padding-top: 7px; flex: none; }
.big-ic { width: 28px; height: 22px; margin-bottom: 8px; }
.big-ic2 { width: 32px; height: 26px; margin-bottom: 4px; }
.big-ic3 { width: 28px; height: 26px; margin: -4px 0 8px; }
.big.tall { padding-top: 4px; }
.sort-ic { width: 30px; height: 29px; margin-bottom: 4px; }
.edit-col { width: 103px; padding-left: 11px; display: flex; flex-direction: column; }
.erow { height: 22px; display: flex; align-items: center; }
.erow.e3 { margin-top: 2px; }
.sigma { width: 16px; font-size: 18px; line-height: 22px; color: #333; text-align: center; }
.collapse { width: 10px; height: 6px; margin: 78px 0 0 9px; }

/* Formula bar */
.fbar { height: 43px; flex: none; background: #e6e6e6; display: flex; align-items: center; padding: 7px 5px 11px; }
.namebox { width: 101px; height: 25px; background: #fff; border: 1px solid #c6c6c6; padding-left: 6px; display: flex; align-items: center; justify-content: space-between; padding-right: 6px; font-size: 12.500px; color: #333; }
.nb-arrow { width: 7px; height: 4px; }
.grip { width: 2px; height: 10px; margin-left: 15px; background: repeating-linear-gradient(#aaa 0 2px, transparent 2px 4px); }
.fbtns { width: 109px; height: 25px; margin-left: 14px; background: #fff; border: 1px solid #c6c6c6; display: flex; align-items: center; gap: 25px; padding-left: 13px; }
.fb-ic { width: 11px; height: 11px; }
.fx { font: italic 14px "Liberation Serif", serif; color: #666; }
.finput { width: 1111px; height: 25px; margin-left: 4px; background: #fff; border: 1px solid #c6c6c6; display: flex; align-items: center; justify-content: space-between; padding: 1px 6px 0 11px; font-size: 12.800px; color: #333; }
.fi-chev { width: 9px; height: 6px; }

/* Sheet */
.workarea { height: 471px; flex: none; display: flex; }
.sheet { width: 1344px; height: 471px; overflow: hidden; flex: none; display: grid;
  grid-template-columns: 37px 83px 142px 123px 108px 169px 134px 207px 111px 230px;
  grid-template-rows: 25px 27px repeat(16, 26px) 3px;
  background: #fdfdfd; font-family: Lato, "Open Sans", sans-serif; color: #111; }
.ch { background: #e6e6e6; border-right: 1px solid #b5b5b5; border-bottom: 1px solid #9e9e9e; display: flex; align-items: center; justify-content: center; font-size: 16.500px; color: #222; padding: 2px 0 0 1px; }
.ch.sel { background: #d2d2d2; color: #11663c; border-bottom: 2px solid #217346; }
.corner { justify-content: flex-end; align-items: flex-end; padding: 0 3px 3px 0; }
.corner-t { width: 17px; height: 17px; }
.rh { background: #e6e6e6; border-right: 1px solid #9e9e9e; border-bottom: 1px solid #c6c6c6; display: flex; align-items: center; justify-content: center; font-size: 16.500px; color: #222; }
.rh.sel { background: #d2d2d2; color: #11663c; border-right: 2px solid #217346; }
.c { border-right: 1px solid #d4d4d4; border-bottom: 1px solid #d4d4d4; padding: 0 3px 0 4px; font-size: 17px; letter-spacing: -.05px; line-height: 25px; white-space: nowrap; overflow: hidden; display: flex; align-items: center; }
.sheet > .c:nth-child(10n+3) { padding-left: 3px; }
.sheet > .c:nth-child(10n+5) { letter-spacing: .15px; }
.sheet > .c:nth-child(10n+7) { letter-spacing: -.2px; }
.sheet > .c:nth-child(10n+6), .sheet > .c:nth-child(10n+8), .sheet > .c:nth-child(10n+9), .sheet > .c:nth-child(10n) { letter-spacing: .3px; }
.n { justify-content: flex-end; padding-right: 3px; }
.sheet > .hd { font-size: 19px; letter-spacing: .1px; padding-right: 0; padding-bottom: 2px; }
.sheet > .hd:nth-child(11), .sheet > .hd:nth-child(12), .sheet > .hd:nth-child(13), .sheet > .hd:nth-child(14) { padding-left: 3px; }
.y { background-color: #ffff00; border-color: #ffff00; }
.t { background-image: linear-gradient(135deg, #0d7a2a 5px, transparent 5.100px); }
.fbtn { margin-left: auto; align-self: flex-end; width: 17px; height: 17px; background: #fff; border: 1px solid #b5b5b5; flex: none; display: flex; align-items: center; justify-content: center; }
.farrow { width: 8px; height: 4px; }
.cur { outline: 2px solid #217346; outline-offset: -2px; position: relative; overflow: visible; }
.handle { position: absolute; right: -3px; bottom: -3px; width: 6px; height: 6px; background: #217346; border: 1px solid #fff; }
.vscroll { width: 22px; background: #d4d4d4; border-left: 4px solid #e6e6e6; border-right: 2px solid #e6e6e6; display: flex; flex-direction: column; box-shadow: inset 0 2px 0 #e6e6e6; }
.sb-btn { height: 16px; margin-top: 2px; background: #fff; border: 1px solid #b5b5b5; display: flex; align-items: center; justify-content: center; flex: none; }
.sb-btn.end { margin-top: auto; }
.sb-a { width: 8px; height: 5px; }
.sb-thumb { height: 17px; background: #fff; border: 1px solid #b5b5b5; border-top: 0; flex: none; }

/* Sheet tabs */
.sheetbar { height: 28px; flex: none; background: #e6e6e6; border-top: 1px solid #9e9e9e; border-bottom: 1px solid #d0d0d0; display: flex; align-items: flex-start; }
.nav { width: 5px; height: 8px; margin-top: 9px; }
.hb .nav { margin-top: 0; }
.stab { width: 65px; height: 24px; text-align: center; line-height: 25px; font-size: 12px; color: #444; }
.stab + .stab { box-shadow: inset -1px 0 0 #9e9e9e; height: 20px; margin-top: 2px; line-height: 21px; }
.stab.on { margin-left: 40px; margin-top: -1px; height: 25px; background: #fafafa; color: #217346; font-weight: 700; border: 1px solid #9e9e9e; border-bottom: 2px solid #217346; }
.plus { width: 16px; height: 16px; margin: 4px 0 0 33px; }
.grip.g2 { margin: 7px 0 0 475px; height: 10px; }
.hscroll { width: 508px; height: 15px; margin: 6px 0 0 14px; display: flex; background: #d0d0d0; }
.hb { width: 15px; height: 15px; background: #fff; border: 1px solid #b5b5b5; display: flex; align-items: center; justify-content: center; flex: none; }
.hthumb { width: 262px; background: #fff; border: 1px solid #b5b5b5; border-left: 0; }
.hb.end { margin-left: auto; }

/* Status bar */
.statusbar { height: 22px; flex: none; background: #fafafa; display: flex; align-items: center; }
.ready { margin-left: 7px; font-size: 11px; color: #444; }
.views { margin-left: auto; display: flex; height: 22px; }
.vb { width: 40px; display: flex; align-items: center; justify-content: center; }
.vb.on { background: #d9d9d9; }
.zs { width: 8px; height: 8px; margin-left: 5px; }
.slider { width: 100px; height: 1px; background: #aaa; margin-left: 6px; display: flex; align-items: center; }
.knob { width: 5px; height: 11px; background: #666; flex: none; margin-left: 52px; }
.zoom { width: 48px; font-size: 11px; padding-left: 13px; color: #444; }

/* Taskbar */
.taskbar { height: 40px; flex: none; position: relative; display: flex; align-items: center; background: linear-gradient(90deg,#4a3f35 0,#443b33 45%,#3b3a36 70%,#3a3a36 100%); color: #fff; }
.winlogo { width: 16px; height: 16px; margin: 0 16px; }
.tsearch { width: 288px; height: 40px; background: #f5f5f5; border: 1px solid #cfcfcf; border-bottom: 0; display: flex; align-items: center; gap: 11px; padding-left: 12px; color: #222; font-size: 14px; margin-right: 2px; }
.app { width: 49px; height: 40px; display: flex; align-items: center; justify-content: center; flex: none; }
.app.run { background: linear-gradient(#5aa9e6,#5aa9e6) center bottom / 40px 2px no-repeat; }
.a12{width:12px;height:7px}.a14{width:14px;height:14px}.a16{width:16px;height:16px}.a21{width:21px;height:18px}.a22{width:22px;height:22px}.a24{width:24px;height:24px}
.tray { margin-left: auto; display: flex; align-items: center; height: 40px; padding-right: 17px; }
.weather { display: block; }
.temp { font-size: 13px; width: 29px; white-space: nowrap; }
.ar { font-family: "DejaVu Sans", sans-serif; font-size: 13.500px; width: 43px; white-space: nowrap; }
.eng { font-size: 11.500px; width: 23px; white-space: nowrap; }
.clock { width: 48px; margin-left: 12px; display: flex; flex-direction: column; align-items: flex-end; line-height: 19px; white-space: nowrap; }
.time { font: 12px/19px "Open Sans", "DejaVu Sans", sans-serif; }
.date { font: 9.500px/19px "DejaVu Sans", sans-serif; letter-spacing: -.3px; }
.notif { width: 24px; height: 24px; }
.recbar { position: absolute; left: 231px; top: 14px; width: 126px; height: 26px; background: #1c1c1c; border-radius: 6px 6px 0 0; display: flex; align-items: center; gap: 8px; padding-left: 2px; color: #eee; }
.rec-pin { width: 9px; height: 13px; }
.rec-ic { width: 19px; height: 17px; }
.wmark { position: absolute; left: 598px; top: -14px; width: 172px; text-align: center; font: 700 44px/56px "DejaVu Sans", sans-serif; color: rgba(205,205,205,.6); white-space: nowrap; }
```
